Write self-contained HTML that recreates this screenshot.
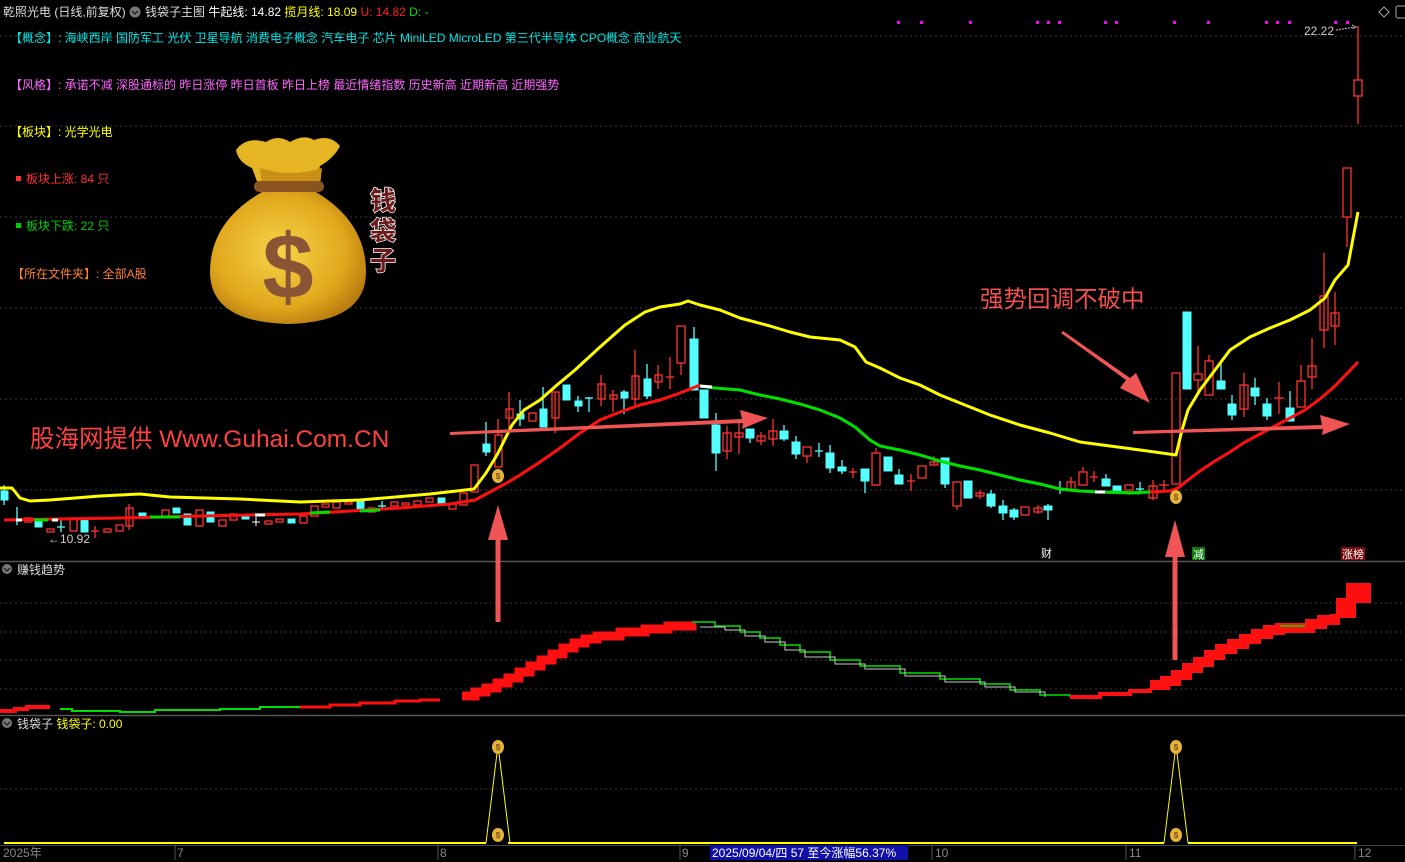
<!DOCTYPE html>
<html><head><meta charset="utf-8">
<style>
html,body{margin:0;padding:0;background:#000;width:1405px;height:862px;overflow:hidden}
svg{display:block}
text{font-family:"Liberation Sans","Noto Sans CJK SC",sans-serif}
.r{fill:none;stroke:#ff3232;stroke-width:1.3}
.c{fill:#54ffff;stroke:#54ffff;stroke-width:1}
.wr{stroke:#ff3232;stroke-width:1.3}
.wc{stroke:#54ffff;stroke-width:1.3}
</style></head><body>
<svg width="1405" height="862" viewBox="0 0 1405 862" xmlns="http://www.w3.org/2000/svg">
<defs>
<radialGradient id="bag" cx="45%" cy="45%" r="60%"><stop offset="0" stop-color="#f7d44a"/><stop offset="0.7" stop-color="#e0a81c"/><stop offset="1" stop-color="#b97c10"/></radialGradient>
</defs>
<rect width="1405" height="862" fill="#000"/>
<g stroke="#3a3a3a" stroke-dasharray="2,3" stroke-width="1">
<line x1="0" y1="36" x2="1405" y2="36"/><line x1="0" y1="126" x2="1405" y2="126"/><line x1="0" y1="217" x2="1405" y2="217"/><line x1="0" y1="308" x2="1405" y2="308"/><line x1="0" y1="399" x2="1405" y2="399"/><line x1="0" y1="490" x2="1405" y2="490"/>
<line x1="0" y1="603" x2="1405" y2="603"/><line x1="0" y1="632" x2="1405" y2="632"/><line x1="0" y1="660" x2="1405" y2="660"/><line x1="0" y1="689" x2="1405" y2="689"/>
<line x1="0" y1="789" x2="1405" y2="789"/>
</g>
<line x1="0" y1="561.5" x2="1405" y2="561.5" stroke="#555" stroke-width="1.5"/>
<line x1="0" y1="715.5" x2="1405" y2="715.5" stroke="#555" stroke-width="1.5"/>

<text x="3" y="16" font-size="12" fill="#ddd">乾照光电 (日线,前复权)</text>
<circle cx="135" cy="12" r="5.5" fill="#777"/><path d="M132 11 l3 3 l3 -3" stroke="#222" fill="none" stroke-width="1.4"/>
<text x="145" y="16" font-size="12" fill="#ddd">钱袋子主图 <tspan fill="#fff">牛起线: 14.82</tspan> <tspan fill="#ffff00">揽月线: 18.09</tspan> <tspan fill="#ff2020">U: 14.82</tspan> <tspan fill="#00e000">D: -</tspan></text>
<path d="M1384 7 l5 5 l-5 5 l-5 -5z" fill="none" stroke="#aaa"/>
<rect x="1396" y="6" width="12" height="12" rx="2" fill="none" stroke="#aaa"/>
<g fill="#ff00ff">
<rect x="897" y="21" width="3" height="3"/><rect x="920" y="21" width="3" height="3"/><rect x="969" y="21" width="3" height="3"/><rect x="1036" y="21" width="3" height="3"/><rect x="1047" y="21" width="3" height="3"/><rect x="1058" y="21" width="3" height="3"/><rect x="1104" y="21" width="3" height="3"/><rect x="1115" y="21" width="3" height="3"/><rect x="1173" y="21" width="3" height="3"/><rect x="1207" y="21" width="3" height="3"/><rect x="1265" y="21" width="3" height="3"/><rect x="1276" y="21" width="3" height="3"/><rect x="1288" y="21" width="3" height="3"/><rect x="1334" y="21" width="3" height="3"/><rect x="1346" y="21" width="3" height="3"/>
</g>

<text x="10" y="42" font-size="12" fill="#00e5e5">【概念】: 海峡西岸 国防军工 光伏 卫星导航 消费电子概念 汽车电子 芯片 MiniLED MicroLED 第三代半导体 CPO概念 商业航天</text>
<text x="10" y="89" font-size="12" fill="#ff66ff">【风格】: 承诺不减 深股通标的 昨日涨停 昨日首板 昨日上榜 最近情绪指数 历史新高 近期新高 近期强势</text>
<text x="10" y="136" font-size="12" fill="#ffff00">【板块】: 光学光电</text>
<rect x="16" y="176" width="5" height="5" fill="#ff3030"/><text x="26" y="183" font-size="12" fill="#ff3030">板块上涨: 84 只</text>
<rect x="16" y="223" width="5" height="5" fill="#00d000"/><text x="26" y="230" font-size="12" fill="#00d000">板块下跌: 22 只</text>
<text x="12" y="278" font-size="12" fill="#ff8030">【所在文件夹】: 全部A股</text>

<g>
<path d="M236 150 q10 -14 30 -8 q12 -8 24 0 q14 -8 24 -2 q16 -6 26 6 q-6 12 -20 20 l-4 18 h-58 l-6 -16 q-14 -6 -16 -18z" fill="#e6b524"/>
<path d="M260 168 q30 10 62 0 l-2 18 h-58z" fill="#c98f14"/>
<rect x="254" y="181" width="70" height="11" rx="5" fill="#8a5322"/>
<path d="M262 192 h54 q50 30 50 80 q0 50 -78 52 q-78 -2 -78 -52 q0 -50 52 -80z" fill="url(#bag)"/>
<text x="288" y="298" font-size="92" font-weight="bold" fill="#8a5535" text-anchor="middle" font-family="Liberation Serif,serif">$</text>
<text font-size="26" font-weight="bold" fill="#6b1a1a" stroke="#fff" stroke-width="1.5" paint-order="stroke" font-family="Noto Sans CJK SC,sans-serif"><tspan x="370" y="210">钱</tspan><tspan x="370" y="240">袋</tspan><tspan x="370" y="270">子</tspan></text>
</g>

<text x="30" y="447" font-size="24.5" fill="#ff4040">股海网提供 Www.Guhai.Com.CN</text>
<text x="980" y="307" font-size="23.5" fill="#f05050">强势回调不破中</text>

<g>
<rect class="c" x="1" y="491" width="7" height="9"/><line class="wc" x1="4" y1="485" x2="4" y2="505"/>
<line class="wc" x1="17" y1="507" x2="17" y2="525"/><line class="wc" x1="13" y1="520" x2="21" y2="520"/>
<rect class="r" x="25" y="518" width="7" height="4"/>
<rect class="c" x="35" y="522" width="7" height="5"/>
<rect class="r" x="47" y="529" width="7" height="3"/>
<line class="wc" x1="61" y1="520" x2="61" y2="532"/><line class="wc" x1="57" y1="527" x2="65" y2="527"/>
<rect class="r" x="70" y="518" width="7" height="13"/>
<rect class="c" x="81" y="520" width="7" height="12"/>
<line class="wr" x1="95" y1="526" x2="95" y2="538"/><line class="wr" x1="91" y1="531" x2="99" y2="531"/>
<rect class="r" x="104" y="529" width="7" height="3"/>
<rect class="r" x="116" y="525" width="7" height="6"/>
<rect class="r" x="126" y="508" width="7" height="18"/><line class="wr" x1="129" y1="504" x2="129" y2="530"/>
<rect class="c" x="139" y="513" width="7" height="3"/>
<rect class="r" x="162" y="510" width="7" height="7"/>
<rect class="c" x="173" y="508" width="7" height="5"/>
<rect class="c" x="184" y="514" width="7" height="11"/>
<rect class="r" x="196" y="510" width="7" height="16"/>
<rect class="c" x="207" y="512" width="7" height="10"/>
<rect class="r" x="219" y="520" width="7" height="6"/>
<rect class="r" x="230" y="514" width="7" height="6"/>
<rect class="c" x="242" y="515" width="7" height="4"/>
<line stroke="#fff" x1="256" y1="517" x2="256" y2="526"/><line stroke="#fff" x1="252" y1="522" x2="260" y2="522"/>
<rect class="r" x="265" y="521" width="7" height="3"/>
<rect class="r" x="276" y="519" width="7" height="3"/>
<rect class="c" x="288" y="519" width="7" height="4"/>
<rect class="r" x="300" y="516" width="7" height="7"/>
<rect class="r" x="311" y="506" width="7" height="10"/>
<rect class="r" x="322" y="504" width="7" height="3"/>
<rect class="r" x="333" y="502" width="7" height="6"/>
<rect class="r" x="345" y="502" width="7" height="2"/>
<rect class="c" x="357" y="500" width="7" height="11"/>
<rect class="r" x="368" y="508" width="7" height="4"/>
<line class="wc" x1="382" y1="501" x2="382" y2="510"/><line class="wc" x1="378" y1="506" x2="386" y2="506"/>
<rect class="r" x="391" y="502" width="7" height="4"/>
<rect class="r" x="402" y="503" width="7" height="2"/>
<rect class="r" x="414" y="501" width="7" height="4"/>
<rect class="r" x="426" y="498" width="7" height="4"/>
<rect class="c" x="438" y="498" width="7" height="6"/>
<rect class="r" x="449" y="504" width="7" height="5"/>
<rect class="r" x="460" y="493" width="7" height="12"/>
<rect class="r" x="471" y="465" width="7" height="27"/>
<text x="48" y="543" font-size="12" fill="#ccc">←10.92</text>
</g>
<g>
<rect class="c" x="483" y="444" width="7" height="8"/><line class="wc" x1="486" y1="422" x2="486" y2="456"/>
<rect class="r" x="495" y="435" width="7" height="32"/><line class="wr" x1="498" y1="419" x2="498" y2="435"/>
<rect class="r" x="506" y="409" width="7" height="9"/><line class="wr" x1="509" y1="392" x2="509" y2="430"/>
<rect class="c" x="517" y="414" width="7" height="5"/><line class="wc" x1="520" y1="400" x2="520" y2="426"/>
<rect class="r" x="529" y="413" width="7" height="8"/>
<rect class="c" x="540" y="409" width="7" height="18"/><line class="wc" x1="543" y1="387" x2="543" y2="427"/>
<rect class="r" x="552" y="392" width="7" height="26"/><line class="wr" x1="555" y1="392" x2="555" y2="433"/>
<rect class="c" x="563" y="385" width="7" height="15"/>
<rect class="c" x="575" y="401" width="7" height="5"/><line class="wc" x1="578" y1="396" x2="578" y2="412"/>
<line class="wc" x1="589" y1="397" x2="589" y2="412"/><line class="wc" x1="585" y1="398" x2="593" y2="398"/>
<rect class="r" x="598" y="384" width="7" height="15"/><line class="wr" x1="601" y1="375" x2="601" y2="406"/>
<rect class="r" x="610" y="395" width="7" height="4"/><line class="wr" x1="613" y1="390" x2="613" y2="412"/>
<rect class="c" x="621" y="392" width="7" height="6"/><line class="wc" x1="624" y1="390" x2="624" y2="414"/>
<rect class="r" x="632" y="376" width="7" height="23"/><line class="wr" x1="635" y1="350" x2="635" y2="405"/>
<rect class="c" x="644" y="379" width="7" height="17"/><line class="wc" x1="647" y1="364" x2="647" y2="399"/>
<rect class="r" x="655" y="375" width="7" height="7"/><line class="wr" x1="658" y1="365" x2="658" y2="389"/>
<line class="wr" x1="670" y1="357" x2="670" y2="389"/><line class="wr" x1="666" y1="377" x2="674" y2="377"/>
<rect class="r" x="677" y="326" width="8" height="37"/><line class="wr" x1="681" y1="363" x2="681" y2="375"/>
<rect class="c" x="690" y="339" width="8" height="51"/><line class="wc" x1="694" y1="327" x2="694" y2="339"/>
<rect class="c" x="700" y="390" width="8" height="28"/>
<rect class="c" x="712" y="425" width="8" height="28"/><line class="wc" x1="716" y1="413" x2="716" y2="471"/>
<rect class="r" x="723" y="433" width="8" height="18"/><line class="wr" x1="727" y1="426" x2="727" y2="459"/>
<rect class="r" x="735" y="433" width="8" height="4"/><line class="wr" x1="739" y1="423" x2="739" y2="454"/>
<rect class="c" x="746" y="429" width="8" height="9"/><line class="wc" x1="750" y1="429" x2="750" y2="443"/>
<rect class="r" x="757" y="436" width="8" height="5"/><line class="wr" x1="761" y1="432" x2="761" y2="445"/>
<rect class="r" x="769" y="431" width="8" height="8"/><line class="wr" x1="773" y1="419" x2="773" y2="446"/>
<rect class="c" x="780" y="431" width="8" height="8"/><line class="wc" x1="784" y1="425" x2="784" y2="441"/>
<rect class="c" x="792" y="442" width="8" height="12"/><line class="wc" x1="796" y1="436" x2="796" y2="459"/>
<rect class="r" x="803" y="447" width="8" height="9"/><line class="wr" x1="807" y1="456" x2="807" y2="463"/>
<line class="wc" x1="819" y1="443" x2="819" y2="457"/><line class="wc" x1="815" y1="451" x2="823" y2="451"/>
<rect class="c" x="826" y="453" width="8" height="15"/><line class="wc" x1="830" y1="445" x2="830" y2="473"/>
<rect class="c" x="838" y="467" width="8" height="4"/><line class="wc" x1="842" y1="460" x2="842" y2="474"/>
<line class="wr" x1="853" y1="468" x2="853" y2="478"/><line class="wr" x1="849" y1="472" x2="857" y2="472"/>
<rect class="c" x="861" y="469" width="8" height="12"/><line class="wc" x1="865" y1="481" x2="865" y2="493"/>
<rect class="r" x="872" y="453" width="8" height="32"/><line class="wr" x1="876" y1="448" x2="876" y2="453"/>
<rect class="c" x="884" y="457" width="8" height="14"/>
<rect class="c" x="895" y="475" width="8" height="9"/><line class="wc" x1="899" y1="469" x2="899" y2="484"/>
<line class="wr" x1="911" y1="474" x2="911" y2="491"/><line class="wr" x1="907" y1="481" x2="915" y2="481"/>
<rect class="r" x="918" y="466" width="8" height="12"/>
<rect class="r" x="930" y="462" width="8" height="3"/><line class="wr" x1="934" y1="456" x2="934" y2="465"/>
<rect class="c" x="941" y="458" width="8" height="26"/><line class="wc" x1="945" y1="484" x2="945" y2="488"/>
<rect class="r" x="953" y="482" width="8" height="24"/><line class="wr" x1="957" y1="506" x2="957" y2="510"/>
<rect class="c" x="964" y="481" width="8" height="17"/>
<rect class="r" x="976" y="493" width="8" height="3"/><line class="wr" x1="980" y1="490" x2="980" y2="499"/>
<rect class="c" x="987" y="494" width="8" height="12"/><line class="wc" x1="991" y1="490" x2="991" y2="508"/>
<rect class="c" x="999" y="506" width="8" height="7"/><line class="wc" x1="1003" y1="500" x2="1003" y2="520"/>
<rect class="c" x="1010" y="510" width="8" height="7"/><line class="wc" x1="1014" y1="508" x2="1014" y2="520"/>
<rect class="r" x="1021" y="507" width="8" height="8"/>
<rect class="r" x="1034" y="508" width="8" height="4"/><line class="wr" x1="1038" y1="505" x2="1038" y2="514"/>
<rect class="c" x="1044" y="506" width="8" height="4"/><line class="wc" x1="1048" y1="504" x2="1048" y2="520"/>
<line class="wc" x1="1060" y1="481" x2="1060" y2="494"/>
<rect class="r" x="1067" y="482" width="8" height="8"/><line class="wr" x1="1071" y1="477" x2="1071" y2="490"/>
<rect class="r" x="1079" y="472" width="8" height="13"/><line class="wr" x1="1083" y1="467" x2="1083" y2="472"/>
<line class="wr" x1="1094" y1="471" x2="1094" y2="482"/><line class="wr" x1="1090" y1="477" x2="1098" y2="477"/>
<rect class="c" x="1102" y="479" width="8" height="7"/><line class="wc" x1="1106" y1="474" x2="1106" y2="486"/>
<rect class="c" x="1113" y="486" width="8" height="5"/>
<rect class="r" x="1125" y="485" width="8" height="5"/>
<line class="wc" x1="1140" y1="482" x2="1140" y2="494"/><line class="wc" x1="1136" y1="489" x2="1144" y2="489"/>
<rect class="r" x="1149" y="486" width="8" height="12"/><line class="wr" x1="1153" y1="480" x2="1153" y2="500"/>
<line class="wr" x1="1164" y1="480" x2="1164" y2="490"/><line class="wr" x1="1159" y1="485" x2="1169" y2="485"/>
</g>
<g>
<rect class="r" x="1172" y="373" width="8" height="111"/>
<rect class="c" x="1183" y="312" width="8" height="77"/>
<rect class="r" x="1194" y="374" width="8" height="6"/><line class="wr" x1="1198" y1="346" x2="1198" y2="374"/><line class="wr" x1="1198" y1="380" x2="1198" y2="393"/>
<rect class="r" x="1205" y="361" width="8" height="34"/><line class="wr" x1="1209" y1="355" x2="1209" y2="361"/>
<rect class="c" x="1217" y="381" width="8" height="8"/><line class="wc" x1="1221" y1="362" x2="1221" y2="389"/>
<rect class="c" x="1228" y="404" width="8" height="11"/><line class="wc" x1="1232" y1="395" x2="1232" y2="420"/>
<rect class="r" x="1240" y="385" width="8" height="24"/><line class="wr" x1="1244" y1="373" x2="1244" y2="417"/>
<rect class="c" x="1251" y="388" width="8" height="8"/><line class="wc" x1="1255" y1="378" x2="1255" y2="405"/>
<rect class="c" x="1263" y="404" width="8" height="12"/><line class="wc" x1="1267" y1="398" x2="1267" y2="420"/>
<line class="wr" x1="1279" y1="382" x2="1279" y2="414"/><line class="wr" x1="1274" y1="398" x2="1284" y2="398"/>
<rect class="c" x="1286" y="408" width="8" height="13"/><line class="wc" x1="1290" y1="391" x2="1290" y2="421"/>
<rect class="r" x="1297" y="381" width="8" height="26"/><line class="wr" x1="1301" y1="365" x2="1301" y2="381"/>
<rect class="r" x="1308" y="366" width="8" height="11"/><line class="wr" x1="1312" y1="338" x2="1312" y2="389"/>
<rect class="r" x="1320" y="296" width="8" height="34"/><line class="wr" x1="1324" y1="253" x2="1324" y2="348"/>
<rect class="r" x="1331" y="313" width="8" height="13"/><line class="wr" x1="1335" y1="292" x2="1335" y2="345"/>
<rect class="r" x="1343" y="168" width="8" height="49"/><line class="wr" x1="1347" y1="217" x2="1347" y2="247"/>
<rect class="r" x="1354" y="80" width="8" height="16"/><line class="wr" x1="1358" y1="26" x2="1358" y2="80"/><line class="wr" x1="1358" y1="96" x2="1358" y2="124"/>
<text x="1304" y="35" font-size="12" fill="#ccc">22.22</text><path d="M1336 30 l20 -3 m-4 -2 l4 2 l-4 2" stroke="#ccc" fill="none" stroke-dasharray="2,1"/>
</g>

<polyline fill="none" stroke="#ffff00" stroke-width="3" stroke-linejoin="round" points="0,488 12,488 20,498 30,501 50,500 100,496 140,494 170,497 240,499 300,502 360,500 430,494 474,489 486,473 497,455 512,425 524,410 540,400 557,385 575,370 600,347 625,325 645,312 660,307 680,304 688,301 700,305 720,310 740,318 770,326 790,332 810,337 840,340 855,347 866,362 880,368 900,378 920,385 940,395 965,405 990,415 1020,425 1050,433 1080,442 1110,446 1140,450 1176,455 1182,430 1188,410 1200,390 1215,370 1230,350 1250,337 1270,328 1290,320 1310,310 1325,298 1335,280 1348,265 1358,212"/>
<polyline fill="none" stroke="#ff1010" stroke-width="3" points="4,520 60,519 120,518 200,516 300,514 400,508 450,504 475,500 490,492 505,484 520,475 540,462 560,448 580,433 600,420 620,412 640,405 660,400 680,393 700,385"/>
<polyline fill="none" stroke="#00e000" stroke-width="3" points="700,386 715,388 740,390 760,395 780,399 800,404 820,410 840,418 855,427 870,440 880,446 900,450 920,455 940,461 960,466 980,470 1000,475 1020,480 1040,484 1060,489 1080,491 1100,492 1130,493 1150,492"/>
<polyline fill="none" stroke="#ff1010" stroke-width="3" points="1150,492 1170,491 1178,488 1188,480 1200,471 1215,461 1230,452 1245,442 1260,434 1275,426 1290,418 1305,410 1320,399 1335,386 1358,362"/>
<g stroke="#00e000" stroke-width="3"><line x1="34" y1="520" x2="48" y2="520"/><line x1="150" y1="517" x2="180" y2="517"/><line x1="310" y1="513" x2="330" y2="512"/><line x1="360" y1="511" x2="380" y2="510"/><line x1="1060" y1="489" x2="1080" y2="491"/><line x1="1110" y1="492" x2="1140" y2="493"/></g>
<g stroke="#fff" stroke-width="3"><line x1="16" y1="520" x2="22" y2="520"/><line x1="52" y1="520" x2="58" y2="520"/><line x1="255" y1="515" x2="265" y2="515"/><line x1="700" y1="386" x2="712" y2="387"/><line x1="1095" y1="492" x2="1105" y2="492"/></g>
<g font-size="8" text-anchor="middle" font-weight="bold">
<ellipse cx="498" cy="476" rx="6" ry="7" fill="#e3b33a"/><text x="498" y="479" fill="#7a4a1a">$</text>
<ellipse cx="1176" cy="497" rx="6" ry="7" fill="#e3b33a"/><text x="1176" y="500" fill="#7a4a1a">$</text>
</g>
<g fill="#f05555">
<path d="M450 432 L742 419 L740 410 L768 418 L742 429 L743 423 L450 435z"/>
<path d="M1133 431 L1322 425 L1320 415 L1350 424 L1322 435 L1323 429 L1133 434z"/>
<path d="M1061 333 L1126 380 L1120 388 L1150 403 L1136 373 L1130 378 L1063 331Z"/>
<path d="M495.5 622 L495.5 540 L488 540 L498 505 L508 540 L500.5 540 L500.5 622z"/>
<path d="M1172.5 660 L1172.5 557 L1165 557 L1175 520 L1185 557 L1177.5 557 L1177.5 660z"/>
</g>
<text x="1041" y="557" font-size="11" fill="#fff">财</text>
<rect x="1192" y="547" width="13" height="13" fill="#0a7a0a"/><text x="1193" y="558" font-size="11" fill="#fff">减</text>
<rect x="1341" y="547" width="24" height="13" fill="#7a0a0a"/><text x="1342" y="558" font-size="11" fill="#fff">涨榜</text>

<circle cx="7" cy="569" r="5" fill="#777"/><path d="M4 568 l3 3 l3 -3" stroke="#222" fill="none" stroke-width="1.4"/>
<text x="17" y="574" font-size="12" fill="#ddd">赚钱趋势</text>
<path fill="none" stroke="#ff1010" stroke-width="4" d="M0 711 H15 V709 H27 V707 H50"/>
<path fill="none" stroke="#00e000" stroke-width="2" d="M60 709 H72 V711 H120 V712 H155 V710 H220 V709 H260 V707 H300"/>
<path fill="none" stroke="#ff1010" stroke-width="3" d="M60 716 M300 707 H330 V705 H360 V703 H395 V701 H420 V700 H440"/>
<path fill="none" stroke="#ff1010" stroke-width="9" d="M462 696 H475 V692 H486 V688 H497 V683 H508 V678 H519 V672 H530 V666 H541 V660 H552 V654 H563 V648 H574 V643 H585 V639 H597 V636 H620 V632 H645 V629 H668 V626 H692 V623"/>
<path fill="none" stroke="#00e000" stroke-width="1.5" d="M692 622 H715 V626 H740 V632 H760 V638 H780 V645 H800 V652 H830 V660 H860 V666 H900 V673 H940 V679 H980 V684 H1010 V690 H1040 V695 H1070 V697"/>
<path fill="none" stroke="#ccc" stroke-width="1" d="M700 627 H725 V630 H745 V636 H765 V642 H785 V650 H805 V657 H835 V664 H865 V669 H905 V676 H945 V682 H985 V687 H1015 V692 H1045 V697"/>
<path fill="none" stroke="#ff1010" stroke-width="4" d="M1070 697 H1100 V694 H1130 V691 H1150 V688"/>
<path fill="none" stroke="#ff1010" stroke-width="10" d="M1150 685 H1165 V681 H1176 V675 H1187 V668 H1198 V662 H1209 V655 H1220 V649 H1232 V644 H1244 V639 H1256 V634 H1268 V630 H1280 V628 H1310 V624 H1322 V620 H1335 V614"/>
<rect x="1336" y="598" width="20" height="20" fill="#ff1010"/>
<rect x="1346" y="583" width="25" height="20" fill="#ff1010"/>
<line x1="1280" y1="626" x2="1305" y2="626" stroke="#00e000" stroke-width="1.5"/>

<circle cx="7" cy="723" r="5" fill="#777"/><path d="M4 722 l3 3 l3 -3" stroke="#222" fill="none" stroke-width="1.4"/>
<text x="17" y="728" font-size="12" fill="#ddd">钱袋子 <tspan fill="#ffff00">钱袋子: 0.00</tspan></text>
<polyline fill="none" stroke="#ffff00" stroke-width="2" points="4,843 486,843"/>
<polyline fill="none" stroke="#ffff00" stroke-width="2" points="508,843 1164,843"/>
<polyline fill="none" stroke="#ffff00" stroke-width="2" points="1188,843 1357,843"/>
<path d="M486 843 L498 745 L510 843 M1164 843 L1176 745 L1188 843" stroke="#ffff00" fill="none" stroke-width="1"/>
<g font-size="8" text-anchor="middle" font-weight="bold">
<ellipse cx="498" cy="747" rx="6" ry="7" fill="#e3b33a"/><text x="498" y="750" fill="#7a4a1a">$</text>
<ellipse cx="498" cy="835" rx="6" ry="7" fill="#e3b33a"/><text x="498" y="838" fill="#7a4a1a">$</text>
<ellipse cx="1176" cy="747" rx="6" ry="7" fill="#e3b33a"/><text x="1176" y="750" fill="#7a4a1a">$</text>
<ellipse cx="1176" cy="835" rx="6" ry="7" fill="#e3b33a"/><text x="1176" y="838" fill="#7a4a1a">$</text>
</g>

<line x1="0" y1="845.5" x2="1405" y2="845.5" stroke="#444"/>
<g stroke="#555"><line x1="175" y1="845" x2="175" y2="860"/><line x1="438" y1="845" x2="438" y2="860"/><line x1="680" y1="845" x2="680" y2="860"/><line x1="932" y1="845" x2="932" y2="860"/><line x1="1126" y1="845" x2="1126" y2="860"/><line x1="1355" y1="845" x2="1355" y2="860"/></g>
<g font-size="12" fill="#888">
<text x="3" y="857">2025年</text><text x="177" y="857">7</text><text x="440" y="857">8</text><text x="682" y="857">9</text><text x="935" y="857">10</text><text x="1129" y="857">11</text><text x="1358" y="857">12</text>
</g>
<rect x="710" y="845" width="198" height="15" fill="#1010a8"/>
<text x="712" y="857" font-size="12" fill="#fff">2025/09/04/四 57 至今涨幅56.37%</text>
</svg>
</body></html>
